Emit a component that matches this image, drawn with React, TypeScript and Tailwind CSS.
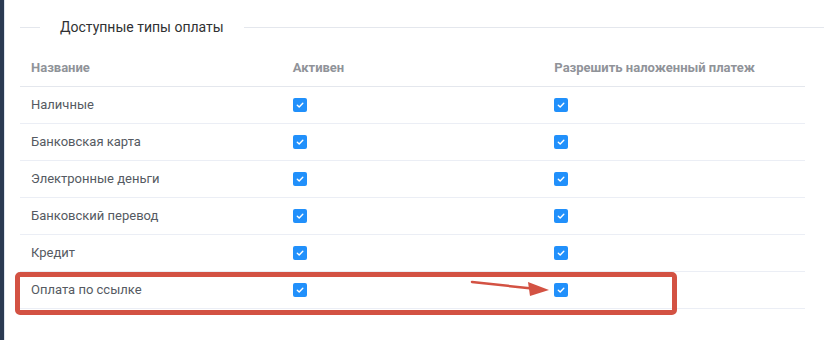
import React from "react";

const rows = [
  "Наличные",
  "Банковская карта",
  "Электронные деньги",
  "Банковский перевод",
  "Кредит",
  "Оплата по ссылке",
];

function Check() {
  return (
    <span className="inline-flex h-[14px] w-[14px] items-center justify-center rounded-[2px] bg-[#2190fb]">
      <svg width="10" height="10" viewBox="0 0 10 10" fill="none">
        <path d="M2.3 5.2 L4.2 7 L7.8 3.2" stroke="white" strokeWidth="1.4" strokeLinecap="round" strokeLinejoin="round" />
      </svg>
    </span>
  );
}

export default function App() {
  return (
    <div
      className="relative flex h-[340px] w-[824px] overflow-hidden bg-white"
      style={{ fontFamily: "Roboto, 'Noto Sans', sans-serif" }}
    >
      <div className="w-[4px] shrink-0 bg-[#2b3a52]" />
      <div className="w-px shrink-0 bg-[#dde4ee]" />
      <div className="flex flex-1 flex-col">
        <div className="mt-[17px] flex h-[20px] items-center pl-[15px]">
          <div className="h-px w-[20px] bg-[#e4e7ed]" />
          <div className="px-[20px] text-[14px] text-[#303133]">Доступные типы оплаты</div>
          <div className="h-px flex-1 bg-[#e4e7ed]" />
        </div>
        <div className="ml-[15px] mt-[13px] w-[785px]">
          <div className="grid h-[37px] grid-cols-3 items-center border-b border-[#e4e7ed] text-[13px] font-bold text-[#909399]">
            <div className="pl-[11px]">Название</div>
            <div className="pl-[11px]">Активен</div>
            <div className="pl-[11px]">Разрешить наложенный платеж</div>
          </div>
          {rows.map((r) => (
            <div
              key={r}
              className="grid h-[37px] grid-cols-3 items-center border-b border-[#ebeef5] text-[13px] text-[#555a62]"
            >
              <div className="pl-[11px]">{r}</div>
              <div className="flex pl-[11px]">
                <Check />
              </div>
              <div className="flex pl-[11px]">
                <Check />
              </div>
            </div>
          ))}
        </div>
      </div>
      <div className="absolute left-[15px] top-[272px] h-[43px] w-[662px] rounded-[5px] border-[5px] border-[#d35243]" />
      <svg className="absolute left-0 top-0" width="824" height="340" viewBox="0 0 824 340">
        <line x1="472" y1="282" x2="532" y2="288.5" stroke="#d35243" strokeWidth="2.5" strokeLinecap="round" />
        <polygon points="549,290 528,282 530,296" fill="#d35243" />
      </svg>
    </div>
  );
}
